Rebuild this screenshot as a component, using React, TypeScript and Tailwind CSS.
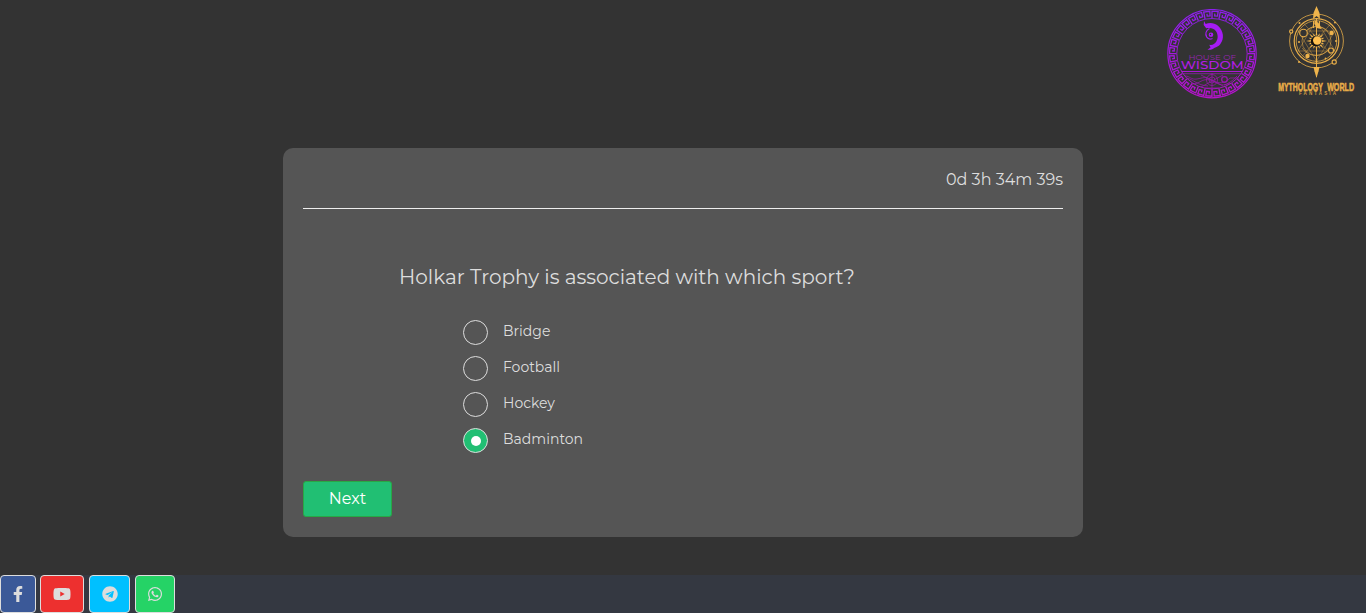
import React from "react";
import { FaFacebookF, FaYoutube, FaTelegram, FaWhatsapp } from "react-icons/fa";

const polar = (r: number, a: number) =>
  `${(45 + r * Math.cos(a)).toFixed(2)} ${(44.7 + r * Math.sin(a)).toFixed(2)}`;

const KEYS = 32;
const KEY_SHAPE: [number, number][] = [
  [0, 0], [0, 1], [0.74, 1], [0.74, 0.34], [0.36, 0.34], [0.36, 0.66],
];
const meander = Array.from({ length: KEYS }, (_, i) =>
  KEY_SHAPE.map(([u, v], j) => `${j ? "L" : "M"}${polar(35.6 + v * 6.9, ((i + u) / KEYS) * Math.PI * 2)}`).join(""),
).join("");

function WisdomLogo() {
  return (
    <svg width="90" height="90" viewBox="0 0 90 90" fill="none">
      <defs>
        <linearGradient id="violet" x1="0" y1="0" x2="0" y2="90" gradientUnits="userSpaceOnUse">
          <stop offset="0" stopColor="#8d20ee" />
          <stop offset="1" stopColor="#b812cc" />
        </linearGradient>
      </defs>
      <g stroke="url(#violet)">
        <circle cx="45" cy="44.700" r="44.200" strokeWidth="1.100" />
        <circle cx="45" cy="44.700" r="35.200" strokeWidth=".9" />
        <path d={meander} strokeWidth="1.300" />
        <path d="M14.500 62.500H75.500" strokeWidth="1.200" />
        <path d="M16 64.700H74" strokeWidth=".6" />
      </g>
      <path d="M37 12l1.700 2.900c3.500-1.400 8.500-1.500 12.300 1.900 5.600 5.200 6.700 12.900 2.200 18.500-1.800 2.300-3.700 2.700-5.500 3.400-1.600 1.500-4.200 2.500-7.200 2l3-2.300-1.200-2.700c2.700.8 5.400-.4 6.900-2.900 2.300-3.800 1.700-8-.4-10.800-2.400-3.200-5.800-3.300-9.600-2.700l-2.500-3.400z" fill="#a51cf4" />
      <path d="M42.500 19.500c-3.500 2-4.500 5.500-2.800 8.500 1.300 2 3.800 2.500 5.800 1.500" stroke="#a51cf4" strokeWidth="1.300" />
      <circle cx="44" cy="25.700" r="2.300" fill="#a51cf4" />
      <circle cx="43.500" cy="25.500" r=".7" fill="#333" />
      <text x="21.500" y="50.700" textLength="47.500" lengthAdjust="spacingAndGlyphs" fontFamily="Montserrat, sans-serif" fontSize="7.300" fill="#9426ae">HOUSE OF</text>
      <text x="13.700" y="60" textLength="63" lengthAdjust="spacingAndGlyphs" fontFamily="Montserrat, sans-serif" fontSize="10.300" fontWeight="500" fill="#b41ce6">WISDOM</text>
      <g stroke="#a315bb" strokeWidth=".75" opacity=".9">
        <circle cx="45" cy="71" r="5.500" />
        <circle cx="45" cy="71" r="3" />
        <circle cx="57.500" cy="70.500" r="2.800" strokeWidth="1.300" />
        <path d="M18 67c5 0 6 4 12 3s8-3 15 1 12 4 18-2h9M25 75c8 0 10-6 18-4s10 8 20 3M34 66l22 11M56 66L34 78M45 64v17M20 69c7 2 10 7 21 8M70 67c-3 3-5 6-13 9M38 79h14" />
      </g>
    </svg>
  );
}

const RAYS = Array.from({ length: 16 }, (_, i) => (i * Math.PI) / 8);
const sunRays = RAYS.map((a, i) => {
  const p = (r: number, t: number) => `${(39.5 + r * Math.cos(t)).toFixed(2)} ${(35 + r * Math.sin(t)).toFixed(2)}`;
  return `M${p(5.5, a - 0.17)}L${p(i % 2 ? 8.5 : 10.5, a)}L${p(5.5, a + 0.17)}Z`;
}).join("");

function MythologyLogo() {
  return (
    <svg width="78" height="90" viewBox="0 0 78 90" fill="none">
      <g transform="translate(.5 0)">
        <g stroke="#e7ad48">
          <circle cx="39" cy="35" r="26.900" strokeWidth=".8" />
          <circle cx="39" cy="35" r="22.300" strokeWidth="1.200" />
          <circle cx="39" cy="35" r="20.300" strokeWidth=".75" />
          <circle cx="39" cy="35" r="14.500" strokeWidth=".55" />
          <path d="M39 14L20.500 45h37zM39 55L20.500 25h37zM26 17L54 49M53 18L25 50" strokeWidth=".5" opacity=".8" />
          <path d="M39 41v30M39 12v17M36 15v7M42 15v7M37 62h4M37 65h4" strokeWidth="1" />
          <path d="M27 27a15 15 0 0 1 24-1M25 42c4 8 18 11 27 1" strokeWidth=".6" />
          <g fill="#333" strokeWidth="1.150">
            <circle cx="26" cy="27" r="3.800" />
            <circle cx="53.500" cy="44.500" r="2.500" />
            <circle cx="56.700" cy="56" r="2.100" />
            <circle cx="13.700" cy="25.500" r="1.600" />
          </g>
        </g>
        <g fill="#efb44c">
          <path d="M39 0l3 7 .5 6-3.500-3-3.500 3L36 7zM36 61h6l-1.500 6L39 72l-1.500-5z" />
          <circle cx="54" cy="27" r="2.200" />
          <circle cx="30" cy="50" r="2.200" />
          <circle cx="22" cy="17" r="1" />
          <circle cx="57.500" cy="16.500" r="1" />
          <circle cx="21.500" cy="56" r="1" />
          <circle cx="21.500" cy="36" r="1" />
          <circle cx="58.500" cy="35" r="1" />
          <circle cx="39" cy="55.500" r="1" />
          <circle cx="48" cy="52.500" r=".9" />
          <path d="M37 14l4 3 3 6-5-1-2-4z" />
        </g>
      </g>
      <path d={sunRays} fill="#efb44c" />
      <circle cx="38.700" cy="35.400" r="4.900" fill="#17130d" />
      <circle cx="40.200" cy="34.500" r="4.200" fill="#ffc050" />
      <g transform="translate(1.200 84.600) scale(.55 1)" fontFamily="'Liberation Sans', sans-serif" fontWeight="700" fontSize="11.600" fill="#e8ad49" stroke="#e8ad49" strokeWidth=".6">
        <text textLength="81" lengthAdjust="spacingAndGlyphs">MYTHOLOGY</text>
        <text x="89" textLength="49" lengthAdjust="spacingAndGlyphs">WORLD</text>
      </g>
      <text x="22" y="88.500" textLength="37" fontFamily="'Liberation Sans', sans-serif" fontWeight="700" fontSize="4.600" fill="#d29c43">FANTASIA</text>
    </svg>
  );
}

const OPTIONS = ["Bridge", "Football", "Hockey", "Badminton"];

export default function App() {
  const [selected, setSelected] = React.useState("Badminton");
  return (
    <div className="flex h-[613px] w-full flex-col overflow-hidden bg-[#333] font-['Montserrat','Inter',sans-serif] text-[#ddd]">
      <header className="flex h-[148px] shrink-0 items-start justify-end gap-[20px] pr-[11px]">
        <div className="pt-[9px]"><WisdomLogo /></div>
        <div className="pt-[6px]"><MythologyLogo /></div>
      </header>
      <main className="mx-auto flex h-[389px] w-[800px] shrink-0 flex-col rounded-[10px] bg-[#555] px-5">
        <div className="flex h-[61px] items-start justify-end border-b border-[#eee] pt-[20px] text-base leading-6">
          <span>0d 3h 34m 39s</span>
        </div>
        <h1 className="mt-[53px] pl-[96px] text-[20px] font-normal leading-[30px]">
          Holkar Trophy is associated with which sport?
        </h1>
        <div className="mt-[28px] flex flex-col gap-[11px] pl-[160px]">
          {OPTIONS.map((label) => (
            <label key={label} className="flex h-[25px] cursor-pointer gap-[15px]">
              <input type="radio" name="answer" className="sr-only" checked={selected === label} onChange={() => setSelected(label)} />
              <span className={"flex size-[25px] items-center justify-center rounded-full border border-[#ddd] " + (selected === label ? "bg-[#21bf73]" : "bg-transparent")}>
                {selected === label && <span className="mt-px ml-px size-[10px] rounded-full bg-white" />}
              </span>
              <span className="text-sm leading-[22px]">{label}</span>
            </label>
          ))}
        </div>
        <button className="mt-[28px] h-[36px] w-[89px] rounded-[3px] border border-[#28a745] bg-[#21bf73] text-base leading-[34px] text-white">
          Next
        </button>
      </main>
      <footer className="mt-[38px] flex h-[38px] shrink-0 bg-[#343841] text-[16px] text-[#ddd]">
        <button aria-label="Facebook" className="mr-[4px] flex w-[36px] items-center justify-center rounded-[4px] border border-[#ddd] bg-[#3b5998]"><FaFacebookF /></button>
        <button aria-label="YouTube" className="mr-[5px] flex w-[44px] items-center justify-center rounded-[4px] border border-[#ddd] bg-[#ed302f]"><FaYoutube className="h-4 w-[18px]" /></button>
        <button aria-label="Telegram" className="mr-[5px] flex w-[41px] items-center justify-center rounded-[4px] border border-[#ddd] bg-[#00c0ff]"><FaTelegram /></button>
        <button aria-label="WhatsApp" className="flex w-[40px] items-center justify-center rounded-[4px] border border-[#ddd] bg-[#25d366]"><FaWhatsapp /></button>
      </footer>
    </div>
  );
}
